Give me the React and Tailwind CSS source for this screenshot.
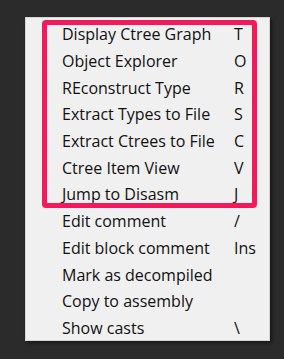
import React from 'react';

const items = [
    { label: 'Display Ctree Graph', key: 'T' },
    { label: 'Object Explorer', key: 'O' },
    { label: 'REconstruct Type', key: 'R' },
    { label: 'Extract Types to File', key: 'S' },
    { label: 'Extract Ctrees to File', key: 'C' },
    { label: 'Ctree Item View', key: 'V' },
    { label: 'Jump to Disasm', key: 'J' },
    { label: 'Edit comment', key: '/' },
    { label: 'Edit block comment', key: 'Ins' },
    { label: 'Mark as decompiled', key: '' },
    { label: 'Copy to assembly', key: '' },
    { label: 'Show casts', key: '\\' },
];

const App = () => {
    return (
        <div className="w-[284px] h-[359px] bg-[#2b2b2b] pl-[25px] pt-[17px] overflow-hidden">
            <div
                className="relative w-[245px] h-[324px] bg-[#f0f0f0] border border-[#d4d4d4] shadow-[2px_2px_3px_rgba(0,0,0,0.45)] pt-[3px] text-[16px] text-[#111]"
                style={{ fontFamily: '"Open Sans", "Noto Sans", sans-serif' }}
            >
                {items.map((item) => (
                    <div key={item.label} className="flex items-center h-[26.7px] leading-none">
                        <span className="pl-[36px] w-[208px] whitespace-nowrap">{item.label}</span>
                        <span>{item.key}</span>
                    </div>
                ))}

                {/* highlight box drawn over the first seven rows */}
                <div className="absolute left-[16px] top-[2px] w-[215px] h-[188px] border-[5px] border-[#f2195c] rounded-[4px]" />
            </div>
        </div>
    );
};

export default App;
